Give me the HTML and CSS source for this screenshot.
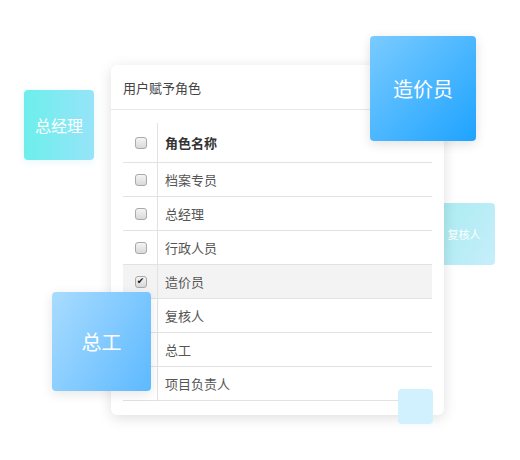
FILE: index.html
```html
<!DOCTYPE html>
<html lang="zh">
<head>
<meta charset="utf-8">
<link rel="stylesheet" href="styles.css">
</head>
<body>
<div class="stage">
  <div class="tile tile-review">复核人</div>
  <div class="card">
    <div class="card-head">用户赋予角色</div>
    <div class="card-body">
      <div class="table">
        <div class="row head"><div class="c-check"><span class="cb"></span></div><div class="c-name">角色名称</div></div>
        <div class="row"><div class="c-check"><span class="cb"></span></div><div class="c-name">档案专员</div></div>
        <div class="row"><div class="c-check"><span class="cb"></span></div><div class="c-name">总经理</div></div>
        <div class="row"><div class="c-check"><span class="cb"></span></div><div class="c-name">行政人员</div></div>
        <div class="row selected"><div class="c-check"><span class="cb checked">✔</span></div><div class="c-name">造价员</div></div>
        <div class="row"><div class="c-check"><span class="cb"></span></div><div class="c-name">复核人</div></div>
        <div class="row"><div class="c-check"><span class="cb"></span></div><div class="c-name">总工</div></div>
        <div class="row"><div class="c-check"><span class="cb"></span></div><div class="c-name">项目负责人</div></div>
      </div>
    </div>
  </div>
  <div class="tile tile-gm">总经理</div>
  <div class="tile tile-cost">造价员</div>
  <div class="tile tile-eng">总工</div>
  <div class="tile tile-small"></div>
</div>
</body>
</html>
```
FILE: styles.css
```css
html, body {
  margin: 0;
  padding: 0;
  background: #ffffff;
}
body {
  font-family: "Noto Sans CJK SC", "Liberation Sans", sans-serif;
}
.stage {
  position: relative;
  width: 520px;
  height: 460px;
  overflow: hidden;
  padding-top: 65px;
  padding-left: 111px;
  box-sizing: border-box;
}
.card {
  position: relative;
  z-index: 2;
  width: 333px;
  height: 350px;
  background: #fff;
  border-radius: 6px;
  box-shadow: 0 3px 14px rgba(0, 0, 0, 0.13);
  box-sizing: border-box;
}
.card-head {
  height: 44px;
  border-bottom: 1px solid #e8e8e8;
  padding-left: 12px;
  display: flex;
  align-items: center;
  font-size: 13px;
  color: #444;
}
.card-body {
  padding: 13px 12px 0 12px;
}
.table {
  display: flex;
  flex-direction: column;
}
.row {
  display: grid;
  grid-template-columns: 34px 1fr;
  height: 34px;
  border-bottom: 1px solid #e2e2e2;
  box-sizing: border-box;
  font-size: 13px;
  color: #555;
}
.row.head {
  height: 40px;
  font-weight: bold;
  color: #333;
}
.row.selected {
  background: #f3f3f3;
}
.c-check {
  display: flex;
  align-items: center;
  justify-content: center;
  padding-left: 1px;
}
.c-name {
  border-left: 1px solid #e2e2e2;
  display: flex;
  align-items: center;
  padding-left: 7px;
}
.cb {
  width: 10px;
  height: 10px;
  border: 1px solid #a9a9a9;
  border-radius: 3px;
  background: linear-gradient(#f4f4f4, #d9d9d9);
  display: flex;
  align-items: center;
  justify-content: center;
  font-size: 9px;
  line-height: 1;
  color: #111;
  font-family: "DejaVu Sans", sans-serif;
}
.tile {
  position: absolute;
  display: flex;
  align-items: center;
  justify-content: center;
  color: #fff;
  border-radius: 4px;
}
.tile-gm {
  left: 24px;
  top: 90px;
  width: 70px;
  height: 70px;
  font-size: 16px;
  background: linear-gradient(90deg, #6cefec, #96e4f8);
  box-shadow: 0 2px 8px rgba(100, 200, 230, 0.15);
}
.tile-cost {
  z-index: 3;
  left: 370px;
  top: 36px;
  width: 106px;
  height: 105px;
  font-size: 20px;
  background: linear-gradient(135deg, #7acbff, #1ea3ff);
  box-shadow: 0 3px 12px rgba(0, 0, 0, 0.12);
}
.tile-eng {
  z-index: 3;
  left: 52px;
  top: 292px;
  width: 99px;
  height: 99px;
  font-size: 20px;
  background: linear-gradient(120deg, #a9dcff, #5db9ff);
  box-shadow: 0 3px 12px rgba(0, 0, 0, 0.1);
}
.tile-review {
  z-index: 1;
  left: 433px;
  top: 203px;
  width: 62px;
  height: 62px;
  font-size: 11px;
  background: linear-gradient(120deg, #a8ecf0, #c6eefb);
}
.tile-small {
  z-index: 3;
  left: 398px;
  top: 389px;
  width: 35px;
  height: 35px;
  background: #d2f1ff;
}
```
